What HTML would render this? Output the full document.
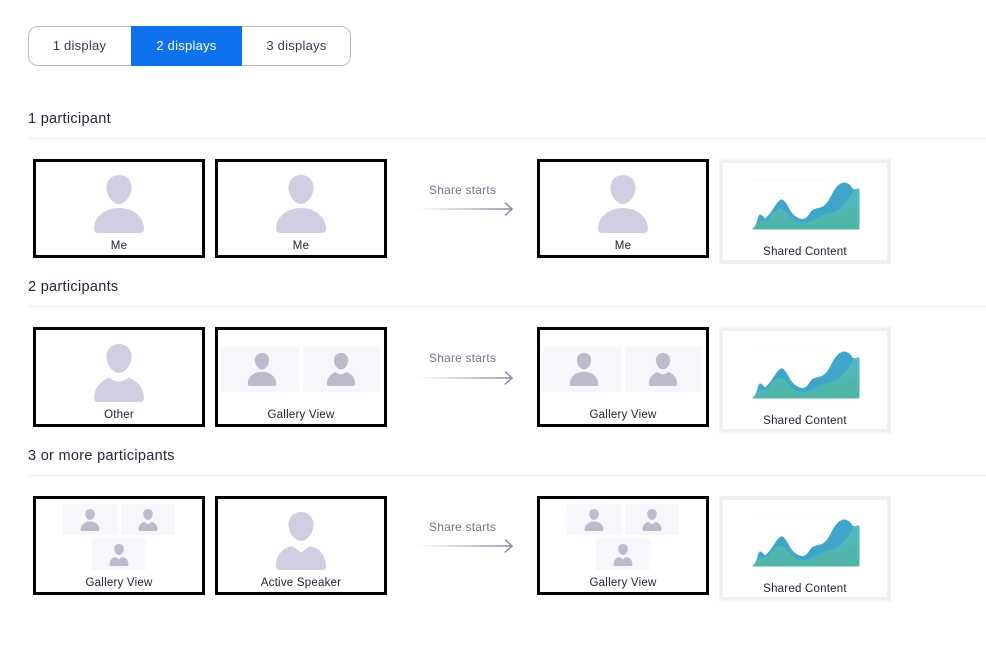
<!DOCTYPE html>
<html><head><meta charset="utf-8"><style>
html,body{margin:0;padding:0;background:#fff;width:986px;height:671px;overflow:hidden;font-family:"Liberation Sans",sans-serif}
div,svg,span{position:absolute;box-sizing:border-box}
.h{left:28px;font-size:14.5px;color:#26263a;line-height:18px;white-space:nowrap;letter-spacing:.3px;margin-top:1px}
.ln{left:28px;width:958px;height:1px;background:#eeeeee}
.f{width:172px;border:3px solid #000;background:#fff}
.c{width:172px;border:4px solid #f0f0f0;background:#fff}
.l{font-size:11.5px;color:#232333;line-height:14px;white-space:nowrap;transform:translateX(-50%);letter-spacing:.22px;margin-top:1px}
.s{font-size:12px;color:#747487;line-height:16px;left:429px;white-space:nowrap;letter-spacing:.2px}
.t{background:#f7f6fb}
.tab{top:26px;height:40px;line-height:39px;font-size:13px;text-align:center;color:#3a3a4e;letter-spacing:.25px}
</style></head><body>
<svg width="0" height="0" style="left:0;top:0"><defs>
<symbol id="p" viewBox="0 0 50 58"><path d="M25 0C32.500 0 37.500 5.500 37.500 12.500C37.500 21 31 29 25 29C19 29 12.500 21 12.500 12.500C12.500 5.500 17.500 0 25 0Z"/><path d="M0 54C0 42 11 33 25 33C39 33 50 42 50 54Q50 58 46 58H4Q0 58 0 54Z"/></symbol>
<symbol id="q" viewBox="0 0 50 58"><path d="M25 0C32.500 0 37.500 5.500 37.500 12.500C37.500 21 31 29 25 29C19 29 12.500 21 12.500 12.500C12.500 5.500 17.500 0 25 0Z"/><path d="M0 54C0 44 7 37 15 33.500C19 36.500 22 37.500 25 37.500C28 37.500 31 36.500 35 33.500C43 37 50 44 50 54Q50 58 46 58H4Q0 58 0 54Z"/></symbol>
<symbol id="v" viewBox="0 0 50 58"><path d="M25 0C32.500 0 37.500 5.500 37.500 12.500C37.500 21 31 29 25 29C19 29 12.500 21 12.500 12.500C12.500 5.500 17.500 0 25 0Z"/><path d="M0 54C0 44 6 37 13 35C14.500 34 16 34 17.500 35L25 40.500L32.500 35C34 34 35.500 34 37 35C44 37 50 44 50 54Q50 58 46 58H4Q0 58 0 54Z"/></symbol>
<linearGradient id="g" x1="0" x2="1" y1="0" y2="0"><stop offset="0" stop-color="#8f8ba5" stop-opacity="0"/><stop offset="1" stop-color="#8f8ba5"/></linearGradient>
<linearGradient id="m" x1="0" x2="0" y1="0" y2="1"><stop offset="0" stop-color="#4fbbc6"/><stop offset="1" stop-color="#4fb5a8"/></linearGradient>
<symbol id="ch" viewBox="0 0 130 65">
<g transform="scale(.3333)">
<path d="M36 30H270" stroke="#f6f6f8" stroke-width="2" fill="none"/>
<path d="M36 178Q48 168 52 150Q56 133 60 133Q68 135 75 146Q90 132 100 115Q115 90 125 88Q135 90 150 120Q165 145 188 147Q200 147 210 128Q218 116 240 113Q258 108 272 80Q290 40 312 37Q328 38 340 58Q350 57 358 56V178Z" fill="#40a6c9"/>
<path d="M36 178Q52 165 60 152Q72 155 85 147Q105 118 120 115Q135 118 155 145Q175 162 195 160Q225 152 245 135Q280 132 300 115Q325 95 340 62Q350 55 358 55V178Z" fill="url(#m)"/>
<path d="M36 178Q80 165 120 150Q160 165 200 172Q260 160 310 135Q335 120 358 105V178Z" fill="#51b5a2" opacity=".5"/>
</g></symbol>
<symbol id="ar" viewBox="0 0 97 16"><rect x="0" y="7.200" width="95" height="1.600" fill="url(#g)"/><path d="M89 1.500L96 8L89 14.500" stroke="#8f8ba5" stroke-width="1.500" fill="none"/></symbol>
</defs></svg>

<div style="left:28px;top:26px;width:323px;height:40px;border:1px solid #bdbdc9;border-radius:10px"></div>
<div class="tab" style="left:28px;width:103px">1 display</div>
<div class="tab" style="left:131px;width:111px;background:#0e72ed;color:#fff">2 displays</div>
<div class="tab" style="left:242px;width:109px">3 displays</div>

<!-- Row 1 -->
<div class="h" style="top:109px">1 participant</div><div class="ln" style="top:138px"></div>
<div class="f" style="left:33px;top:159px;height:99px"></div>
<svg style="left:94px;top:175px;fill:#d0cee3" width="50" height="58"><use href="#p"/></svg>
<div class="l" style="left:119px;top:238px">Me</div>
<div class="f" style="left:215px;top:159px;height:99px"></div>
<svg style="left:276px;top:175px;fill:#d0cee3" width="50" height="58"><use href="#p"/></svg>
<div class="l" style="left:301px;top:238px">Me</div>
<div class="s" style="top:182px">Share starts</div>
<svg style="left:416px;top:201px" width="97" height="16"><use href="#ar"/></svg>
<div class="f" style="left:537px;top:159px;height:99px"></div>
<svg style="left:598px;top:175px;fill:#d0cee3" width="50" height="58"><use href="#p"/></svg>
<div class="l" style="left:623px;top:238px">Me</div>
<div class="c" style="left:719px;top:159px;height:105px"></div>
<svg style="left:740px;top:170px" width="130" height="65"><use href="#ch"/></svg>
<div class="l" style="left:805px;top:244px">Shared Content</div>

<!-- Row 2 -->
<div class="h" style="top:277px">2 participants</div><div class="ln" style="top:306px"></div>
<div class="f" style="left:33px;top:327px;height:100px"></div>
<svg style="left:94px;top:344px;fill:#d0cee3" width="50" height="58"><use href="#q"/></svg>
<div class="l" style="left:119px;top:407px">Other</div>
<div class="f" style="left:215px;top:327px;height:100px"></div>
<div class="t" style="left:221px;top:347px;width:78px;height:45px"></div>
<div class="t" style="left:303px;top:347px;width:77px;height:45px"></div>
<svg style="left:247px;top:353px;fill:#bdbace" width="30" height="33"><use href="#p"/></svg>
<svg style="left:326px;top:353px;fill:#bdbace" width="30" height="33"><use href="#q"/></svg>
<div class="l" style="left:301px;top:407px">Gallery View</div>
<div class="s" style="top:350px">Share starts</div>
<svg style="left:416px;top:370px" width="97" height="16"><use href="#ar"/></svg>
<div class="f" style="left:537px;top:327px;height:100px"></div>
<div class="t" style="left:543px;top:347px;width:78px;height:45px"></div>
<div class="t" style="left:625px;top:347px;width:77px;height:45px"></div>
<svg style="left:569px;top:353px;fill:#bdbace" width="30" height="33"><use href="#p"/></svg>
<svg style="left:648px;top:353px;fill:#bdbace" width="30" height="33"><use href="#q"/></svg>
<div class="l" style="left:623px;top:407px">Gallery View</div>
<div class="c" style="left:719px;top:327px;height:106px"></div>
<svg style="left:740px;top:339px" width="130" height="65"><use href="#ch"/></svg>
<div class="l" style="left:805px;top:413px">Shared Content</div>

<!-- Row 3 -->
<div class="h" style="top:446px">3 or more participants</div><div class="ln" style="top:475px"></div>
<div class="f" style="left:33px;top:496px;height:99px"></div>
<div class="t" style="left:63px;top:504px;width:54px;height:31px"></div>
<div class="t" style="left:121px;top:504px;width:54px;height:31px"></div>
<div class="t" style="left:92px;top:539px;width:54px;height:31px"></div>
<svg style="left:80px;top:509px;fill:#bdbace" width="20" height="22"><use href="#p"/></svg>
<svg style="left:138px;top:509px;fill:#bdbace" width="20" height="22"><use href="#v"/></svg>
<svg style="left:109px;top:544px;fill:#bdbace" width="20" height="22"><use href="#v"/></svg>
<div class="l" style="left:119px;top:575px">Gallery View</div>
<div class="f" style="left:215px;top:496px;height:99px"></div>
<svg style="left:276px;top:512px;fill:#d0cee3" width="50" height="58"><use href="#v"/></svg>
<div class="l" style="left:301px;top:575px">Active Speaker</div>
<div class="s" style="top:519px">Share starts</div>
<svg style="left:416px;top:538px" width="97" height="16"><use href="#ar"/></svg>
<div class="f" style="left:537px;top:496px;height:99px"></div>
<div class="t" style="left:567px;top:504px;width:54px;height:31px"></div>
<div class="t" style="left:625px;top:504px;width:54px;height:31px"></div>
<div class="t" style="left:596px;top:539px;width:54px;height:31px"></div>
<svg style="left:584px;top:509px;fill:#bdbace" width="20" height="22"><use href="#p"/></svg>
<svg style="left:642px;top:509px;fill:#bdbace" width="20" height="22"><use href="#v"/></svg>
<svg style="left:613px;top:544px;fill:#bdbace" width="20" height="22"><use href="#v"/></svg>
<div class="l" style="left:623px;top:575px">Gallery View</div>
<div class="c" style="left:719px;top:496px;height:105px"></div>
<svg style="left:740px;top:507px" width="130" height="65"><use href="#ch"/></svg>
<div class="l" style="left:805px;top:581px">Shared Content</div>
</body></html>
